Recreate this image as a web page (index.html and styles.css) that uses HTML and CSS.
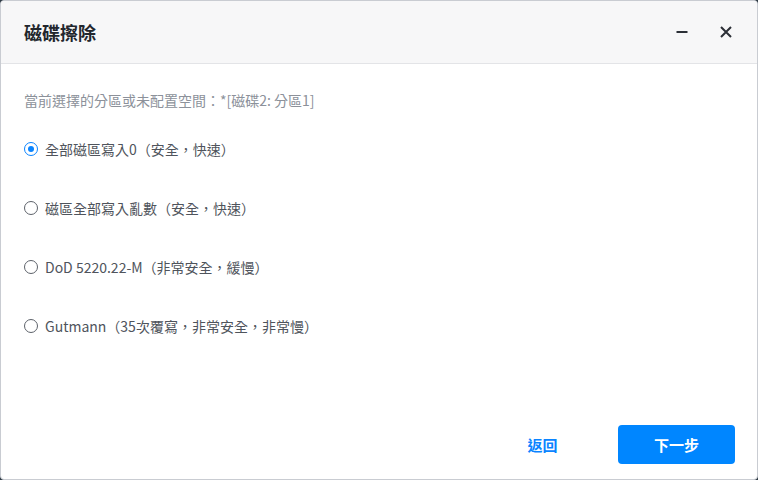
FILE: index.html
```html
<!DOCTYPE html>
<html>
<head>
  <title>磁碟擦除</title>
  <link rel="stylesheet" href="styles.css">
</head>
<body>
  <div class="dialog">
    <div class="dialog-header">
      <h1>磁碟擦除</h1>
      <div class="header-actions">
        <button class="icon-btn" title="最小化">
          <svg width="14" height="14" viewBox="0 0 14 14"><path d="M1.5 7h11" stroke="#2b2f36" stroke-width="2.2"/></svg>
        </button>
        <button class="icon-btn" title="關閉">
          <svg width="14" height="14" viewBox="0 0 14 14"><path d="M2 2l10 10M12 2L2 12" stroke="#2b2f36" stroke-width="2"/></svg>
        </button>
      </div>
    </div>
    <div class="dialog-body">
      <p class="current">當前選擇的分區或未配置空間：*[磁碟2: 分區1]</p>
      <label class="option">
        <input type="radio" name="mode" checked>
        <span class="radio"></span>
        全部磁區寫入0（安全，快速）
      </label>
      <label class="option">
        <input type="radio" name="mode">
        <span class="radio"></span>
        磁區全部寫入亂數（安全，快速）
      </label>
      <label class="option">
        <input type="radio" name="mode">
        <span class="radio"></span>
        DoD 5220.22-M（非常安全，緩慢）
      </label>
      <label class="option">
        <input type="radio" name="mode">
        <span class="radio"></span>
        Gutmann（35次覆寫，非常安全，非常慢）
      </label>
    </div>
    <div class="dialog-footer">
      <button class="back-btn">返回</button>
      <button class="next-btn">下一步</button>
    </div>
  </div>
</body>
</html>
```

FILE: styles.css
```css
html, body {
  margin: 0;
  height: 100%;
  background: #2e3a44;
}

.dialog {
  box-sizing: border-box;
  height: 480px;
  display: flex;
  flex-direction: column;
  background: #ffffff;
  border: 1px solid #c9ccd2;
  border-radius: 4px;
  overflow: hidden;
  font-family: "Noto Sans CJK TC", "Noto Sans", sans-serif;
}

.dialog-header {
  height: 62px;
  display: flex;
  align-items: center;
  justify-content: space-between;
  padding: 0 20px 0 23px;
  background: #f7f7f8;
  border-bottom: 1px solid #e3e4e7;
}

.dialog-header h1 {
  margin: 0;
  font-size: 18px;
  font-weight: bold;
  color: #22262d;
}

.header-actions {
  display: flex;
  gap: 22px;
}

.icon-btn {
  width: 22px;
  height: 22px;
  padding: 0;
  border: none;
  background: none;
  display: flex;
  align-items: center;
  justify-content: center;
  cursor: pointer;
}

.dialog-body {
  flex: 1;
  padding: 24px 23px 0;
}

.current {
  margin: 0 0 25px;
  font-size: 14px;
  line-height: 24px;
  color: #8c919a;
}

.option {
  display: flex;
  align-items: center;
  height: 24px;
  margin-bottom: 35px;
  font-size: 14px;
  color: #4f545c;
  cursor: pointer;
}

.option input {
  display: none;
}

.radio {
  box-sizing: border-box;
  width: 14px;
  height: 14px;
  margin-right: 7px;
  border: 1.6px solid #5d626a;
  border-radius: 50%;
  display: flex;
  align-items: center;
  justify-content: center;
}

.option input:checked + .radio {
  border-color: #0a84ff;
}

.option input:checked + .radio::after {
  content: "";
  width: 6px;
  height: 6px;
  border-radius: 50%;
  background: #0a84ff;
}

.dialog-footer {
  display: flex;
  justify-content: flex-end;
  align-items: center;
  gap: 27px;
  padding: 0 22px 15px;
}

.back-btn {
  width: 97px;
  height: 39px;
  border: none;
  background: none;
  color: #0a84ff;
  font-family: inherit;
  font-size: 15px;
  font-weight: bold;
  cursor: pointer;
}

.next-btn {
  width: 117px;
  height: 39px;
  border: none;
  border-radius: 4px;
  background: #0086ff;
  color: #ffffff;
  font-family: inherit;
  font-size: 15px;
  font-weight: bold;
  cursor: pointer;
}
```
